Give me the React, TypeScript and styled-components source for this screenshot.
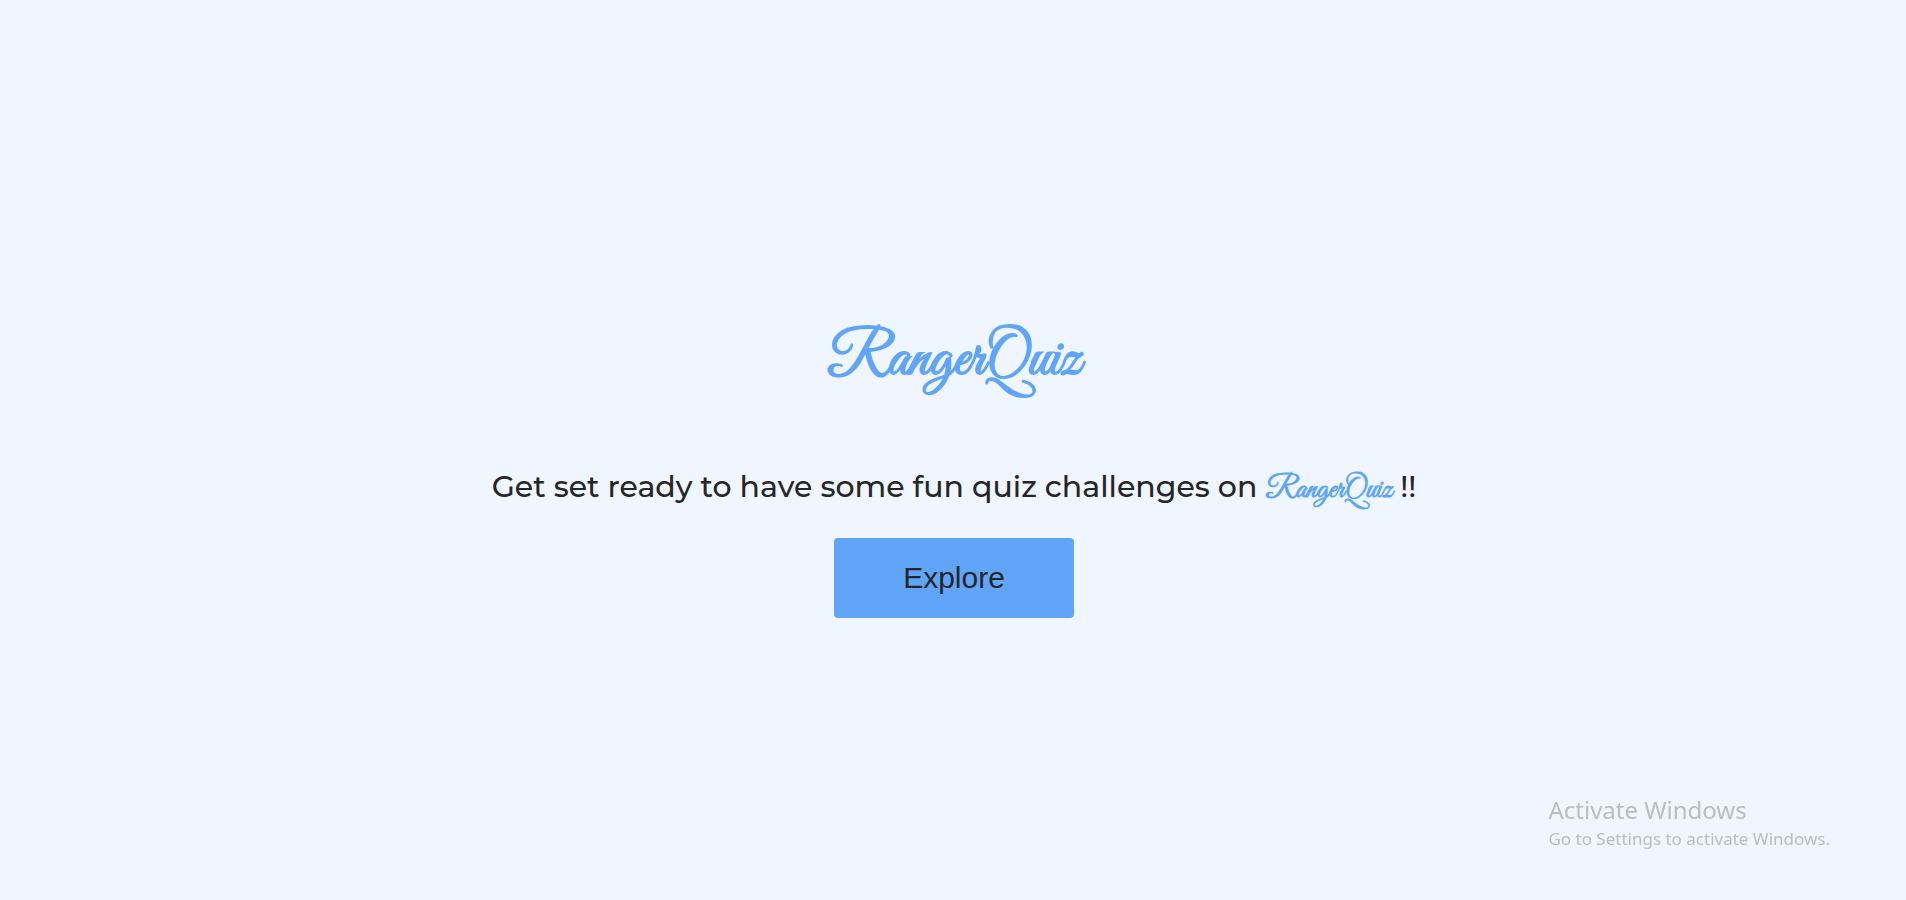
import React from "react";
import styled, { createGlobalStyle } from "styled-components";

const GlobalStyle = createGlobalStyle`
  *, *::before, *::after { box-sizing: border-box; }
  body { margin: 0; background: #eff6ff; color: #262626; }
`;

const Page = styled.main`
  min-height: 100vh;
  display: flex;
  flex-direction: column;
  align-items: center;
  justify-content: center;
  padding: 0 0 2px 2px;
  background: #eff6ff;
`;

const Brand = styled.span<{ $size: number }>`
  font-family: "Great Vibes", "Liberation Serif", cursive;
  font-size: ${({ $size }) => $size}px;
  font-weight: 700;
  color: #60a5fa;
`;

const Title = styled.h1`
  margin: 0 0 16px;
  line-height: 160px;
`;

const Tagline = styled.p`
  margin: 0 0 20px;
  font-family: Montserrat, Inter, sans-serif;
  font-size: 30px;
  font-weight: 500;
  line-height: 56px;
  text-align: center;
`;

const ExploreButton = styled.button`
  width: 240px;
  height: 80px;
  padding: 0;
  border: 0;
  border-radius: 4px;
  background: #60a5fa;
  color: #262626;
  font-family: "Liberation Sans", Arial, sans-serif;
  font-size: 30px;
  cursor: pointer;
`;

const Watermark = styled.aside`
  position: fixed;
  right: 76px;
  bottom: 48px;
  font-family: "Segoe UI", "Noto Sans", sans-serif;
  color: #bbbdc0;
  pointer-events: none;
`;

const WatermarkTitle = styled.p`
  margin: 0;
  font-size: 24px;
  line-height: 32px;
`;

const WatermarkHint = styled.p`
  margin: 0;
  font-size: 17px;
  line-height: 26px;
`;

export default function App() {
  return (
    <>
      <GlobalStyle />
      <Page>
        <Title>
          <Brand $size={60}>RangerQuiz</Brand>
        </Title>
        <Tagline>
          Get set ready to have some fun quiz challenges on <Brand $size={30}>RangerQuiz</Brand> !!
        </Tagline>
        <ExploreButton type="button">Explore</ExploreButton>
      </Page>
      <Watermark>
        <WatermarkTitle>Activate Windows</WatermarkTitle>
        <WatermarkHint>Go to Settings to activate Windows.</WatermarkHint>
      </Watermark>
    </>
  );
}
